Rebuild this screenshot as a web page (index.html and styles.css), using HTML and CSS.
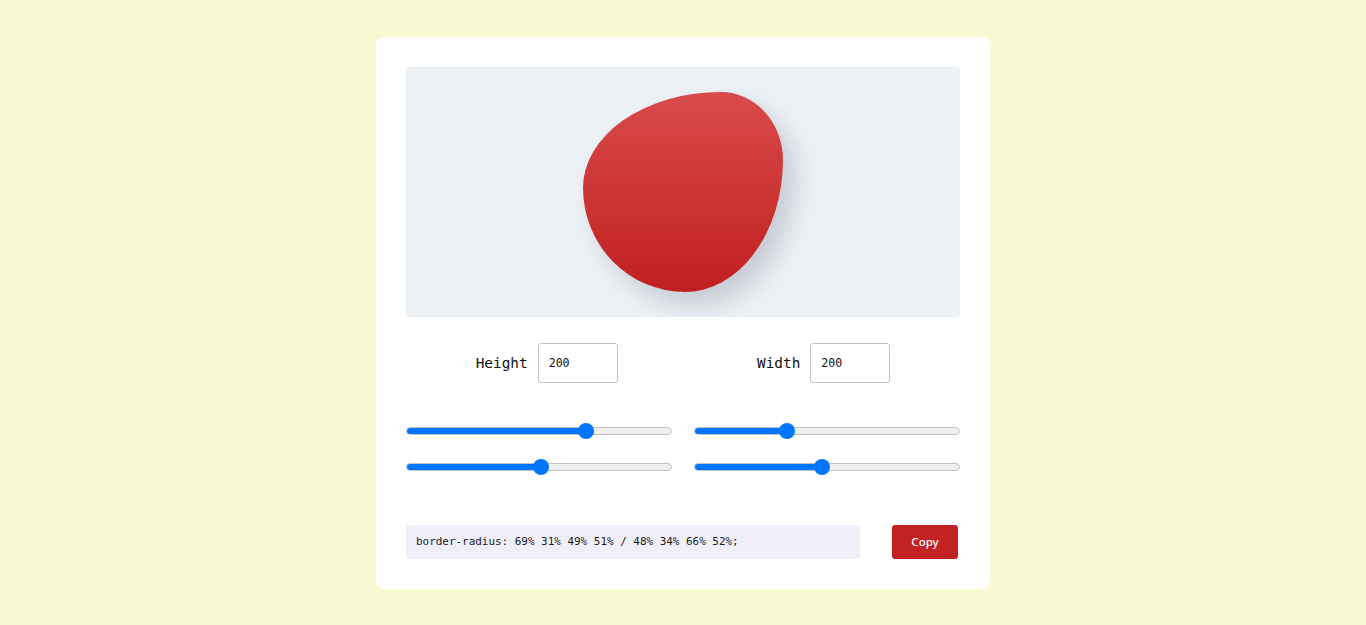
FILE: index.html
```html
<!DOCTYPE html>
<html lang="en">
<head>
<meta charset="utf-8">
<title>Blob generator</title>
<link rel="stylesheet" href="styles.css">
</head>
<body>
<main class="card">
  <section class="preview">
    <div class="blob"></div>
  </section>
  <section class="dims">
    <label class="dim">Height <input class="dim-input" type="text" value="200"></label>
    <label class="dim">Width <input class="dim-input" type="text" value="200"></label>
  </section>
  <section class="sliders">
    <input class="range" type="range" min="0" max="100" value="69" style="--v:0.69">
    <input class="range" type="range" min="0" max="100" value="34" style="--v:0.34">
    <input class="range" type="range" min="0" max="100" value="51" style="--v:0.51">
    <input class="range" type="range" min="0" max="100" value="48" style="--v:0.48">
  </section>
  <section class="output">
    <div class="code">border-radius: 69% 31% 49% 51% / 48% 34% 66% 52%;</div>
    <button class="copy" type="button">Copy</button>
  </section>
</main>
</body>
</html>
```

FILE: styles.css
```css
* { box-sizing: border-box; }

html, body { margin: 0; padding: 0; }

body {
  background: #f8f9d2;
  min-height: 100vh;
  display: flex;
  align-items: center;
  justify-content: center;
  font-family: "Noto Sans", sans-serif;
}

.card {
  width: 614px;
  background: #ffffff;
  border-radius: 8px;
  padding: 30px;
}

.preview {
  height: 250px;
  background: #edf2f6;
  border-radius: 4px;
  display: flex;
  align-items: center;
  justify-content: center;
  overflow: hidden;
}

.blob {
  width: 200px;
  height: 200px;
  border-radius: 69% 31% 49% 51% / 48% 34% 66% 52%;
  background: linear-gradient(180deg, #d94b4b 0%, #c01f1f 100%);
  box-shadow: 12px 14px 26px rgba(60, 70, 90, 0.22);
}

.dims {
  margin-top: 26px;
  display: flex;
  justify-content: space-around;
}

.dim {
  display: flex;
  align-items: center;
  gap: 10px;
  font-family: "DejaVu Sans Mono", monospace;
  font-size: 14.4px;
  line-height: 18px;
  color: #111;
}

.dim-input {
  width: 80px;
  height: 40px;
  border: 1px solid #c2c1c9;
  border-radius: 3px;
  padding: 0 10px;
  font-family: "DejaVu Sans Mono", monospace;
  font-size: 11.6px;
  color: #111;
  background: #fff;
  outline: none;
}

.sliders {
  margin-top: 40px;
  display: grid;
  grid-template-columns: 1fr 1fr;
  column-gap: 22px;
  row-gap: 20px;
}

.range {
  -webkit-appearance: none;
  appearance: none;
  display: block;
  width: 100%;
  height: 16px;
  margin: 0;
  background: transparent;
  cursor: pointer;
}

.range::-webkit-slider-runnable-track {
  height: 8px;
  border-radius: 4px;
  border: 1px solid #c4c4c4;
  background:
    linear-gradient(to right, #0075ff calc(8px + (100% - 16px) * var(--v)), #efefef calc(8px + (100% - 16px) * var(--v)));
}

.range::-webkit-slider-thumb {
  -webkit-appearance: none;
  appearance: none;
  width: 16px;
  height: 16px;
  margin-top: -5px;
  border-radius: 50%;
  background: #0075ff;
  border: none;
}

.output {
  margin-top: 50px;
  display: flex;
  align-items: stretch;
  gap: 32px;
  padding-right: 2px;
}

.code {
  flex: 1;
  height: 34px;
  display: flex;
  align-items: center;
  padding: 0 10px;
  background: #f0eff9;
  border-radius: 3px;
  font-family: "DejaVu Sans Mono", monospace;
  font-size: 10.95px;
  color: #1a1a1a;
  white-space: nowrap;
}

.copy {
  width: 66px;
  height: 34px;
  border: none;
  border-radius: 3px;
  background: #c22222;
  color: #fff;
  font-family: "Noto Sans", sans-serif;
  font-size: 11.5px;
  font-weight: 500;
  cursor: pointer;
}
```
